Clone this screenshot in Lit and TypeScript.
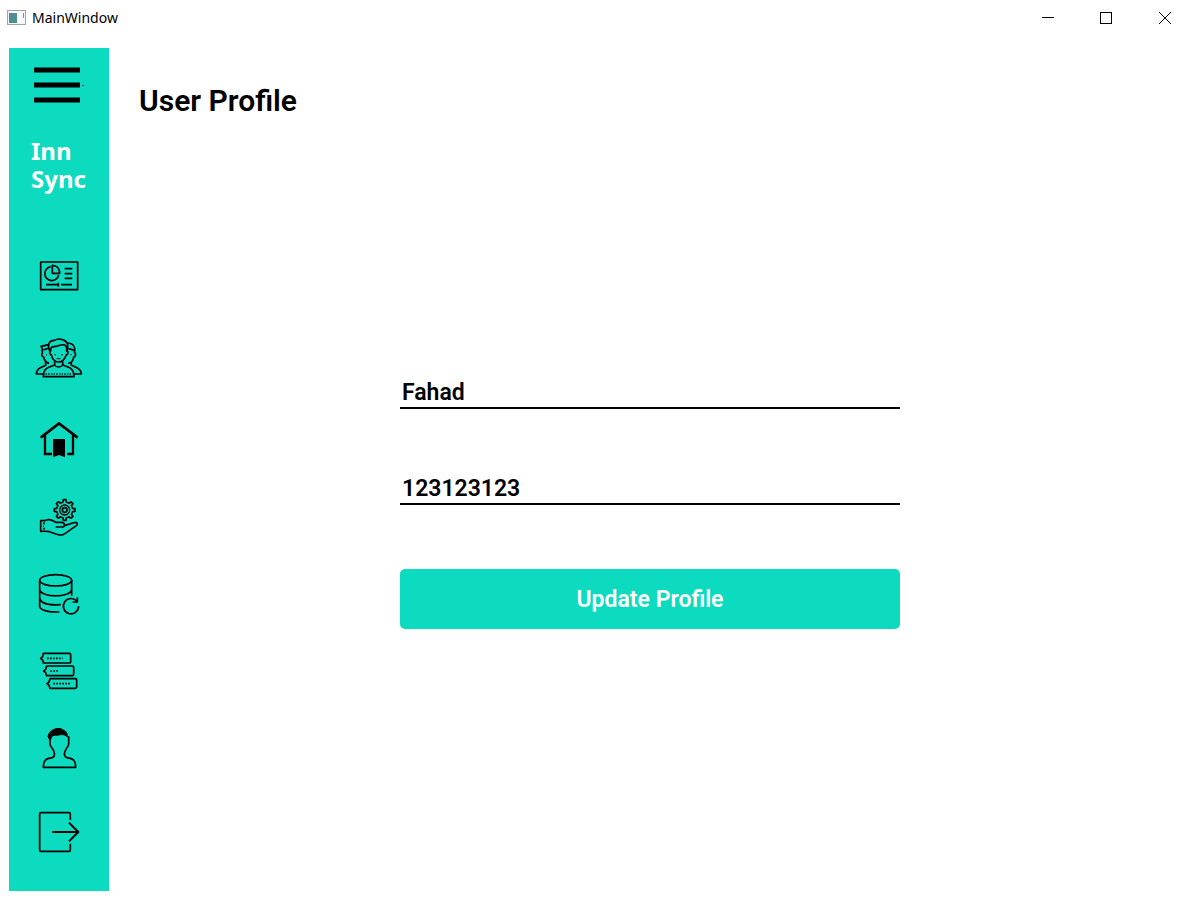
import { LitElement, html, svg, css } from "lit";
import { customElement, state } from "lit/decorators.js";

const gearTeeth = [0, 45, 90, 135, 180, 225, 270, 315];

const icons = {
  dashboard: svg`
    <rect x="38" y="36" width="111" height="83"/>
    <path d="M68 50A21 21 0 1 0 92 75"/>
    <path d="M73 46V70H95C95 56 87 46 73 46Z"/>
    <path d="M110 56H133M110 71H133M110 85H133M54 104H92M99 104H132M91 98V110"/>`,
  customers: svg`
    <path d="M68 76C67 66 70 62 78 62C92 62 98 53 110 57C116 60 117 68 116 76"/>
    <path d="M66 77C56 55 65 42 80 43C92 34 122 42 119 62L117 78"/>
    <path d="M69 74C64 74 64 86 70 86C72 98 80 108 91 108C102 108 111 98 115 86C121 86 121 74 116 74"/>
    <path d="M80 106V117L62 124C51 128 46 136 46 152H138C138 136 133 128 122 124L104 117V106"/>
    <path d="M80 117C84 125 100 125 104 117"/>
    <path d="M62 56L39 61L43 68C42 73 42 78 44 82M44 80C39 80 42 94 47 93C49 103 55 110 63 112M53 109V118L37 125C28 130 25 137 25 144H46M46 72L61 67"/>
    <path d="M119 52C132 50 144 60 139 80M139 80C145 80 143 94 137 93C136 103 130 110 121 112M130 109V118L147 125C156 130 160 137 160 144H138M121 68C129 70 134 69 137 74"/>
    <path d="M80 86H84M100 86H104M54 86H57M127 86H130" stroke-width="4"/>
    <path d="M86 98H97" stroke-width="3"/>
    <path d="M53 144H132" stroke-dasharray="4 4"/>`,
  home: svg`
    <path d="M38 83L93 40L149 83" stroke-width="8" stroke-linejoin="miter"/>
    <path d="M51 74V132H72M135 74V132H118" stroke-width="7" stroke-linejoin="miter"/>
    <path d="M75 87H111V142L93 135L75 142Z" fill="currentColor" stroke="none"/>`,
  services: svg`
    ${gearTeeth.map(
      (a) => svg`<path transform="rotate(${a} 110 72)"
        d="M101 50L105 48L106 41H114L115 48L119 50"/>`
    )}
    <circle cx="110" cy="72" r="15" stroke-width="4"/>
    <circle cx="110" cy="72" r="7" stroke-width="5"/>
    <path d="M83 123H104C112 121 111 110 101 109H84C76 105 67 97 55 102L50 104H38V136C53 136 57 135 64 137L86 145C94 148 105 147 112 142L145 119C152 114 146 107 137 110L109 119"/>
    <path d="M45 112H51M45 120H48M45 128H51"/>`,
  database: svg`
    <ellipse cx="83" cy="55" rx="48" ry="17"/>
    <path d="M35 55V134C37 145 62 151 94 150M131 55V101M35 82C37 108 129 108 131 82M35 108C38 125 65 130 98 128"/>
    <path d="M146 117A23 23 0 1 0 152 133M148 106V120H134"/>`,
  rooms: svg`
    <path d="M46 40H124Q128 40 128 44V65Q128 69 124 69H46L44 60L38 55L44 50Z"/>
    <path d="M56 78H133Q137 78 137 82V103Q137 107 133 107H56L53 98L47 93L53 88Z"/>
    <path d="M66 116H142Q146 116 146 120V141Q146 145 142 145H66L63 136L57 131L63 126Z"/>
    <path d="M57 55H104M67 93H92M76 131H129" stroke-dasharray="5 4"/>`,
  profile: svg`
    <path d="M60 61L64 51C71 39 96 32 105 42C114 45 118 50 118 63C112 56 104 55 98 56C88 59 76 55 71 62L67 72L63 68Z" fill="currentColor" stroke-width="3"/>
    <path d="M66 67V84C67 91 72 95 74 99C80 108 83 122 72 125C54 128 46 132 46 154H143C143 132 135 128 117 125C105 121 109 107 115 98C117 94 122 91 122 83V61"/>`,
  logout: svg`
    <path d="M211 60V42Q211 38 207 38H123Q119 38 119 42V149Q119 154 123 154H207Q211 154 211 149V131"/>
    <path d="M157 96H235M207 68L235 96L207 124" stroke-width="6"/>`,
};

interface NavItem {
  label: string;
  icon: keyof typeof icons;
  box: string;
}

const overview: NavItem[] = [
  { label: "Dashboard", icon: "dashboard", box: "-3 -18 192 192" },
  { label: "Customers", icon: "customers", box: "-3 0 192 192" },
  { label: "Home", icon: "home", box: "-3 -6 192 192" },
];
const management: NavItem[] = [
  { label: "Services", icon: "services", box: "-3 -3 192 192" },
  { label: "Database", icon: "database", box: "-3 0 192 192" },
  { label: "Rooms", icon: "rooms", box: "-3 -3 192 192" },
  { label: "Profile", icon: "profile", box: "-3 0 192 192" },
];
const session: NavItem[] = [
  { label: "Log out", icon: "logout", box: "81 0 192 192" },
];

@customElement("title-bar")
export class TitleBar extends LitElement {
  static styles = css`
    :host {
      display: flex;
      align-items: center;
      height: 36px;
      padding-left: 7px;
      font: 14px/20px "Noto Sans", sans-serif;
      color: #000;
    }
    .name { flex: 1; padding-left: 5px; }
    .app { display: block; width: 20px; height: 16px; }
    .control {
      width: 58px;
      height: 36px;
      padding: 0;
      border: 0;
      background: none;
      display: grid;
      place-items: center;
    }
    .glyph { width: 14px; height: 14px; fill: none; stroke: #000; }
  `;

  render() {
    return html`
      <svg class="app" viewBox="0 0 20 16" aria-hidden="true">
        <rect x=".5" y=".5" width="18" height="14" fill="#f5f7f8" stroke="#a0a5a8"/>
        <rect x="2" y="3" width="8" height="10" fill="#4b918f"/>
        <rect x="2" y="3" width="4" height="5" fill="#5b82a0"/>
        <path d="M11 3H14V13H11Z" fill="#fff"/>
        <path d="M16.500 3V8" stroke="#6d9b99"/>
      </svg>
      <span class="name">MainWindow</span>
      <button class="control" aria-label="Minimize">
        <svg class="glyph" viewBox="0 0 14 14"><path d="M0 6.500H12"/></svg>
      </button>
      <button class="control" aria-label="Maximize">
        <svg class="glyph" viewBox="0 0 14 14"><rect x=".5" y="1.500" width="11" height="11"/></svg>
      </button>
      <button class="control" aria-label="Close">
        <svg class="glyph" viewBox="0 0 14 14"><path d="M1 1L13 13M13 1L1 13"/></svg>
      </button>
    `;
  }
}

@customElement("side-bar")
export class SideBar extends LitElement {
  static styles = css`
    :host {
      display: flex;
      flex-direction: column;
      align-items: center;
      box-sizing: border-box;
      width: 100px;
      background: #0ddbc0;
      color: #000;
    }
    button {
      display: block;
      padding: 0;
      border: 0;
      background: none;
      color: inherit;
      cursor: pointer;
    }
    .menu { margin-top: 16px; }
    .bars { display: block; width: 52px; height: 42px; }
    .brand {
      width: 56px;
      margin: 31px 0 51px;
      font: 700 24px/28px "Noto Sans", sans-serif;
      color: #fff;
    }
    .nav { display: flex; flex-direction: column; }
    .group { display: flex; flex-direction: column; gap: 13px; margin-bottom: 13px; }
    .group.wide { gap: 18px; }
    .group.last { margin-top: 7px; }
    .icon {
      display: block;
      width: 64px;
      height: 64px;
      fill: none;
      stroke: currentColor;
      stroke-width: 5px;
      stroke-linejoin: round;
    }
  `;

  private group(items: NavItem[], kind: string) {
    return html`<div class="group ${kind}">
      ${items.map(
        (item) => html`<button aria-label=${item.label}>
          <svg class="icon" viewBox=${item.box}>${icons[item.icon]}</svg>
        </button>`
      )}
    </div>`;
  }

  render() {
    return html`
      <button class="menu" aria-label="Menu">
        <svg class="bars" viewBox="0 0 52 42">
          <path d="M1 6H47M1 21H47M1 36H47" stroke="#000" stroke-width="5"/>
          <path d="M49 21.500H51" stroke="#033"/>
        </svg>
      </button>
      <div class="brand">Inn Sync</div>
      <nav class="nav">
        ${this.group(overview, "wide")} ${this.group(management, "")}
        ${this.group(session, "last")}
      </nav>
    `;
  }
}

@customElement("profile-page")
export class ProfilePage extends LitElement {
  static styles = css`
    :host {
      display: flex;
      flex-direction: column;
      box-sizing: border-box;
      padding-top: 37px;
      font-family: Roboto, sans-serif;
      color: #000;
    }
    .title { margin: 0 0 0 24px; font-size: 30px; line-height: 32px; font-weight: 600; }
    .form {
      flex: 1;
      display: flex;
      flex-direction: column;
      justify-content: center;
      gap: 64px;
      width: 100%;
      max-width: 500px;
      margin: 0 auto;
      padding-bottom: 2px;
    }
    .field {
      box-sizing: border-box;
      width: 100%;
      height: 32px;
      padding: 0 2px;
      border: 0;
      border-bottom: 2px solid #000;
      border-radius: 0;
      outline: none;
      background: none;
      font: 600 23px/28px Roboto, sans-serif;
      color: inherit;
    }
    .submit {
      height: 60px;
      padding: 2px 0 0;
      border: 0;
      border-radius: 5px;
      background: #0ddbc0;
      font: 600 23px/28px Roboto, sans-serif;
      color: #fff;
      cursor: pointer;
    }
  `;

  @state() private user = "Fahad";
  @state() private password = "123123123";

  render() {
    return html`
      <h1 class="title">User Profile</h1>
      <form class="form" @submit=${(e: Event) => e.preventDefault()}>
        <input class="field" type="text" aria-label="Name" .value=${this.user}
          @input=${(e: Event) => (this.user = (e.target as HTMLInputElement).value)} />
        <input class="field" type="text" aria-label="Password" .value=${this.password}
          @input=${(e: Event) => (this.password = (e.target as HTMLInputElement).value)} />
        <button class="submit">Update Profile</button>
      </form>
    `;
  }
}

@customElement("app-root")
export class AppRoot extends LitElement {
  static styles = css`
    :host {
      display: flex;
      flex-direction: column;
      box-sizing: border-box;
      min-height: 100vh;
      padding-bottom: 32px;
      background: #fff;
    }
    .body { flex: 1; display: flex; gap: 6px; padding: 12px 9px 0; }
    .page { flex: 1; }
  `;

  render() {
    return html`
      <title-bar></title-bar>
      <div class="body">
        <side-bar></side-bar>
        <profile-page class="page"></profile-page>
      </div>
    `;
  }
}
